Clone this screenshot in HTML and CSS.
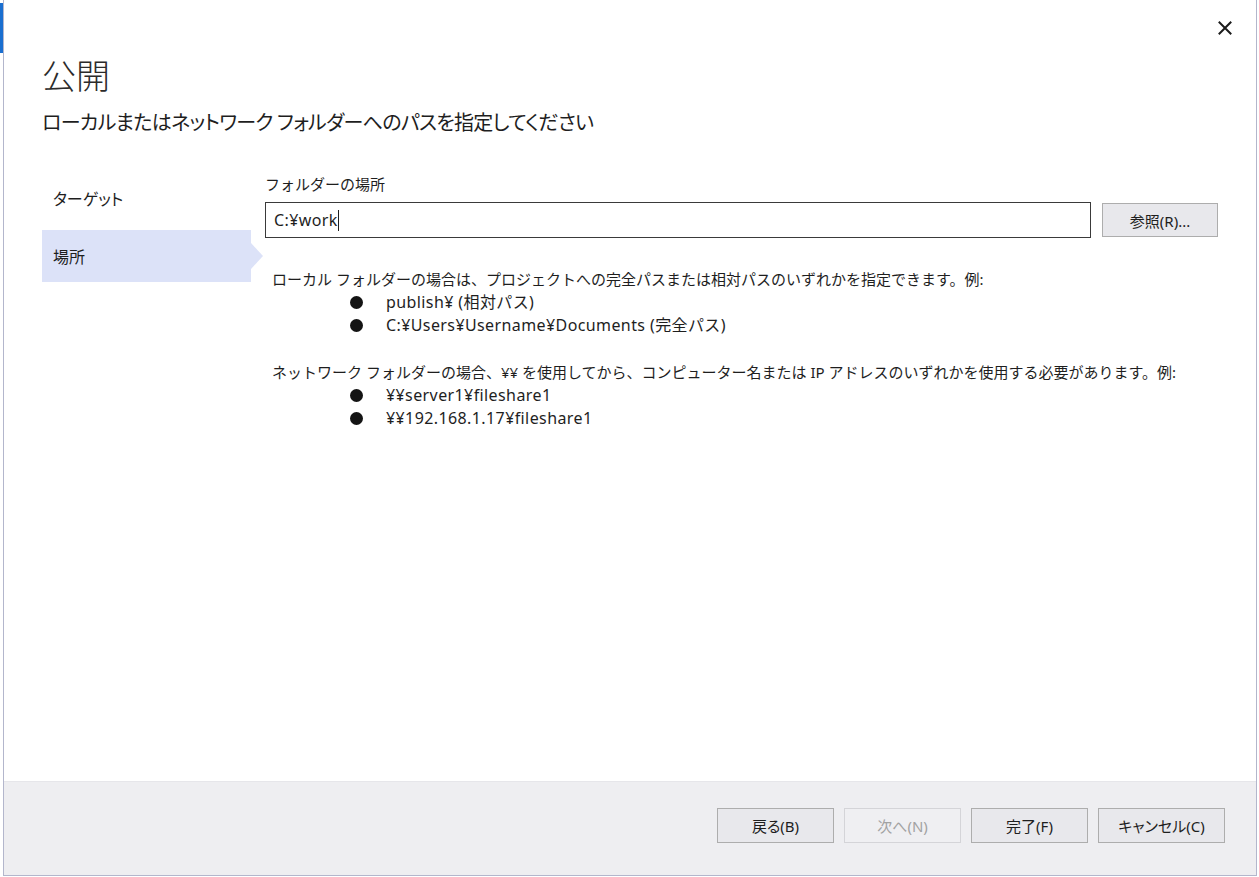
FILE: index.html
```html
<!DOCTYPE html>
<html lang="ja">
  <head>
    <meta charset="UTF-8" />
    <meta name="viewport" content="width=device-width, initial-scale=1.0" />
    <title>公開</title>
    <link rel="stylesheet" href="styles.css">
  </head>
  <body>
    <div class="dialog">
      <!-- タスクバー側の青いハイライト -->
      <div class="edge-accent"></div>

      <button class="close-btn" aria-label="閉じる">
        <svg width="14" height="14" viewBox="0 0 14 14">
          <path d="M1.5 1.5 L12.5 12.5 M12.5 1.5 L1.5 12.5" stroke="#1b1b1b" stroke-width="2" stroke-linecap="square"></path>
        </svg>
      </button>

      <div class="dialog-main">
        <h1 class="dialog-title">公開</h1>
        <p class="dialog-subtitle">ローカルまたはネットワーク フォルダーへのパスを指定してください</p>

        <div class="wizard">
          <nav class="steps">
            <div class="step">ターゲット</div>
            <div class="step step-active">場所</div>
          </nav>

          <div class="pane">
            <label class="field-label" for="folder">フォルダーの場所</label>
            <div class="field-row">
              <div class="path-input" id="folder">C:¥work<span class="caret"></span></div>
              <button class="btn btn-browse">参照(R)...</button>
            </div>

            <div class="help">
              <p>ローカル フォルダーの場合は、プロジェクトへの完全パスまたは相対パスのいずれかを指定できます。例:</p>
              <ul>
                <li>publish¥ (相対パス)</li>
                <li>C:¥Users¥Username¥Documents (完全パス)</li>
              </ul>
              <p>ネットワーク フォルダーの場合、¥¥ を使用してから、コンピューター名または IP アドレスのいずれかを使用する必要があります。例:</p>
              <ul>
                <li>¥¥server1¥fileshare1</li>
                <li>¥¥192.168.1.17¥fileshare1</li>
              </ul>
            </div>
          </div>
        </div>
      </div>

      <footer class="dialog-footer">
        <button class="btn">戻る(B)</button>
        <button class="btn" disabled>次へ(N)</button>
        <button class="btn">完了(F)</button>
        <button class="btn btn-wide">キャンセル(C)</button>
      </footer>
    </div>
  </body>
</html>
```

FILE: styles.css
```css
* {
  box-sizing: border-box;
}

body {
  margin: 0;
  background: #ffffff;
  font-family: "Noto Sans", "Noto Sans CJK JP", sans-serif;
  color: #1e1e1e;
}

.dialog {
  position: relative;
  margin-left: 3px;
  width: 1254px;
  height: 876px;
  border-left: 1px solid #b3b6cc;
  border-right: 1px solid #b3b6cc;
  border-bottom: 1px solid #b3b6cc;
  display: flex;
  flex-direction: column;
  background: #ffffff;
}

.edge-accent {
  position: absolute;
  left: -4px;
  top: 3px;
  width: 3px;
  height: 50px;
  background: #1a6fd0;
}

.close-btn {
  position: absolute;
  top: 20px;
  right: 23px;
  width: 16px;
  height: 16px;
  padding: 0;
  border: none;
  background: none;
  display: flex;
  align-items: center;
  justify-content: center;
}

.dialog-main {
  flex: 1;
  padding: 54px 38px 0 38px;
}

.dialog-title {
  margin: 0;
  font-family: "Noto Sans CJK JP", sans-serif;
  font-size: 34px;
  line-height: 41px;
  font-weight: 300;
  color: #2b2b2b;
}

.dialog-subtitle {
  margin: 14px 0 0 0;
  font-size: 20px;
  line-height: 28px;
  font-feature-settings: "palt";
  letter-spacing: -0.7px;
  color: #1e1e1e;
}

.wizard {
  display: flex;
  margin-top: 35px;
}

/* 左側のステップ一覧 */
.steps {
  width: 209px;
  display: flex;
  flex-direction: column;
  gap: 6px;
  font-feature-settings: "palt";
}

.step {
  position: relative;
  height: 52px;
  display: flex;
  align-items: center;
  padding-left: 11px;
  font-size: 16px;
  color: #1e1e1e;
}

.step-active {
  background: #dce2f8;
}

.step-active::after {
  content: "";
  position: absolute;
  right: -12px;
  top: 13px;
  border-top: 13px solid transparent;
  border-bottom: 13px solid transparent;
  border-left: 12px solid #dce2f8;
}

.pane {
  margin-left: 14px;
  flex: 1;
}

.field-label {
  display: block;
  font-size: 15px;
  line-height: 20px;
  margin-top: 2px;
}

.field-row {
  display: flex;
  gap: 11px;
  margin-top: 8px;
}

.path-input {
  width: 826px;
  height: 36px;
  border: 1px solid #3a3a3a;
  padding: 0 8px;
  display: flex;
  align-items: center;
  font-size: 16px;
  letter-spacing: 0.4px;
  color: #1e1e1e;
}

.caret {
  display: inline-block;
  width: 1px;
  height: 21px;
  background: #1e1e1e;
}

.btn {
  height: 35px;
  width: 117px;
  border: 1px solid #adadad;
  background: #e8e8ec;
  font-family: inherit;
  font-feature-settings: "palt";
  font-size: 15px;
  color: #1e1e1e;
  padding: 0;
}

.btn:disabled {
  border-color: #d4d4d8;
  background: #efeff2;
  color: #a2a2a2;
}

.btn-browse {
  width: 116px;
  height: 34px;
  margin-top: 1px;
}

.btn-wide {
  width: 127px;
}

/* 説明文 */
.help {
  margin-top: 30px;
  padding-left: 7px;
  font-size: 15px;
  line-height: 23px;
}

.help p {
  margin: 0;
}

.help ul {
  margin: 0 0 24px 0;
  padding: 0;
  list-style: none;
}

.help li {
  position: relative;
  padding-left: 114px;
  font-size: 16px;
  letter-spacing: 0.4px;
}

.help li::before {
  content: "";
  position: absolute;
  left: 78px;
  top: 5px;
  width: 13px;
  height: 13px;
  border-radius: 50%;
  background: #141414;
}

.dialog-footer {
  height: 94px;
  background: #eeeef1;
  border-top: 1px solid #e6e6ea;
  display: flex;
  justify-content: flex-end;
  align-items: flex-start;
  gap: 10px;
  padding: 26px 31px 0 0;
}
```
